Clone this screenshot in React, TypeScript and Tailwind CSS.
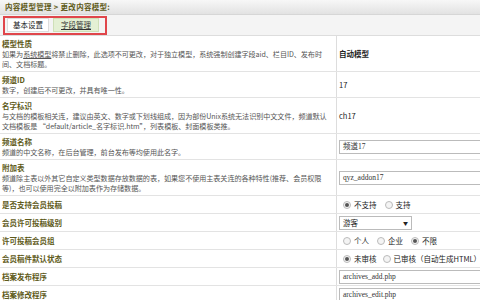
import React from 'react';

const font = { fontFamily: '"Noto Sans CJK SC", "Liberation Sans", sans-serif' };

function Radio({ checked }: { checked?: boolean }) {
  return (
    <span className="inline-flex w-[8px] h-[8px] rounded-full border border-[#bbb] bg-[#f4f4f4] items-center justify-center mr-[3px]">
      {checked && <span className="w-[4px] h-[4px] rounded-full bg-[#555]" />}
    </span>
  );
}

function Row({ title, desc, children }: { title: string; desc?: React.ReactNode; children?: React.ReactNode }) {
  return (
    <div className="flex border-b border-[#e3e3e3] bg-white">
      <div className={`w-[337px] shrink-0 border-r border-[#ddd] px-[2px] overflow-hidden ${desc ? 'py-[2.5px]' : 'h-[17px] flex items-center'}`}>
        <div className="font-bold text-[#5e5a18] h-[10px] leading-[10px]">{title}</div>
        {desc && <div className="text-[#555] leading-[10px] text-[7.1px] whitespace-nowrap tracking-[-0.05px]">{desc}</div>}
      </div>
      <div className="flex-1 flex items-center pl-[2px] text-[#222] overflow-hidden">{children}</div>
    </div>
  );
}

function Input({ value }: { value: string }) {
  return (
    <div className="w-[160px] h-[14px] border border-[#bbb] bg-white flex items-center px-[3px] text-[#333] shrink-0" style={{ fontFamily: '"Liberation Serif", "Noto Sans CJK SC", serif' }}>{value}</div>
  );
}

function Line({ children }: { children: React.ReactNode }) {
  return <div className="h-[10px]">{children}</div>;
}

export default function App() {
  return (
    <div className="w-[480px] h-[300px] overflow-hidden bg-white text-[7.5px]" style={font}>
      <div className="h-[15px] bg-gradient-to-b from-[#f7f7f7] to-[#e2e2e2] border-b border-[#d6d6d6] flex items-center px-[5px] font-bold text-[#5e5a18] tracking-[0.3px]">
        内容模型管理 &gt; 更改内容模型:
      </div>
      <div className="h-[21px] bg-[#f4f4f4] border-b border-[#ddd] flex items-center px-[3px]">
        <div className="flex items-center gap-[4px] h-[19px] border-2 border-[#e0464b] px-[2px] w-[104px]">
          <div className="h-[14px] w-[42px] bg-white border border-[#ddd] flex items-center justify-center text-[#222]">基本设置</div>
          <div className="h-[14px] w-[46px] bg-[#e4f0d4] border border-[#cfe0b8] flex items-center justify-center text-[#333] underline">字段管理</div>
        </div>
      </div>

      <Row title="模型性质" desc={<><Line>如果为<span className="underline">系统模型</span>将禁止删除，此选项不可更改，对于独立模型，系统强制创建字段aid、栏目ID、发布时</Line><Line>间、文档标题。</Line></>}>
        <span className="font-bold">自动模型</span>
      </Row>
      <Row title="频道ID" desc={<Line>数字，创建后不可更改，并具有唯一性。</Line>}>
        <span>17</span>
      </Row>
      <Row title="名字标识" desc={<><Line>与文档的模板相关连，建议由英文、数字或下划线组成，因为部份Unix系统无法识别中文文件，频道默认</Line><Line>文档模板是 “default/article_名字标识.htm”，列表模板、封面模板类推。</Line></>}>
        <span>ch17</span>
      </Row>
      <Row title="频道名称" desc={<Line>频道的中文名称，在后台管理，前台发布等均使用此名字。</Line>}>
        <Input value="频道17" />
      </Row>
      <Row title="附加表" desc={<><Line>频道除主表以外其它自定义类型数据存放数据的表，如果您不使用主表关连的各种特性(推荐、会员权限</Line><Line>等)，也可以使用完全以附加表作为存储数据。</Line></>}>
        <Input value="qyz_addon17" />
      </Row>
      <Row title="是否支持会员投稿">
        <span className="flex items-center pl-[4px]">
          <Radio checked />不支持<span className="w-[8px]" /><Radio />支持
        </span>
      </Row>
      <Row title="会员许可投稿级别">
        <div className="w-[73px] h-[14px] border border-[#bbb] bg-white flex items-center justify-between px-[3px]">
          <span>游客</span>
          <span className="text-[5px]">▼</span>
        </div>
      </Row>
      <Row title="许可投稿会员组">
        <span className="flex items-center pl-[4px]">
          <Radio />个人<span className="w-[8px]" /><Radio />企业<span className="w-[8px]" /><Radio checked />不限
        </span>
      </Row>
      <Row title="会员稿件默认状态">
        <span className="flex items-center pl-[4px] whitespace-nowrap">
          <Radio checked />未审核<span className="w-[6px]" /><Radio />已审核（自动生成HTML）
        </span>
      </Row>
      <Row title="档案发布程序">
        <Input value="archives_add.php" />
      </Row>
      <Row title="档案修改程序">
        <Input value="archives_edit.php" />
      </Row>
    </div>
  );
}
